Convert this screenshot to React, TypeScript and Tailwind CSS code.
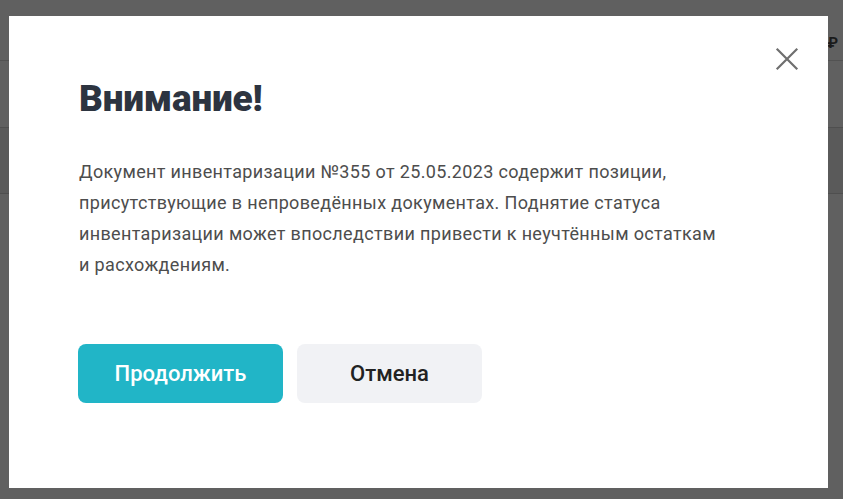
function BackgroundPage() {
  return (
    <div className="flex flex-col w-full h-full">
      <div className="h-[61px] border-b border-[#525252] flex items-start justify-end pt-[36px] pr-[5px]">
        <span className="text-[15px] font-bold leading-none text-[#1a1a1a]">₽</span>
      </div>
      <div className="h-[67px] border-b border-[#4f4f4f]" />
      <div className="h-[66px] bg-[#5a5a5a] border-b border-[#4f4f4f]" />
      <div className="flex-1" />
    </div>
  );
}

export default function App() {
  return (
    <div
      className="relative w-[843px] h-[499px] overflow-hidden bg-[#606060]"
      style={{ fontFamily: "Roboto, 'Noto Sans', sans-serif" }}
    >
      <BackgroundPage />

      <div className="absolute left-[9px] top-[16px] w-[819px] h-[472px] bg-white">
        <button className="absolute right-[29px] top-[31px] w-[24px] h-[24px] flex items-center justify-center text-[#6f6f6f]">
          <svg width="24" height="24" viewBox="0 0 24 24" fill="none">
            <path d="M2.5 2.5L21.5 21.5M21.5 2.5L2.5 21.5" stroke="currentColor" strokeWidth="2.2" strokeLinecap="square" />
          </svg>
        </button>

        <div className="pl-[70px] pt-[62px] flex flex-col">
          <h1 className="text-[37px] leading-[41px] font-black text-[#2d3440] tracking-[-0.2px]">
            Внимание!
          </h1>
          <p className="mt-[37px] w-[648px] text-[18px] leading-[31px] tracking-[0.35px] text-[#4d4d4d]">
            Документ инвентаризации №355 от 25.05.2023 содержит позиции, присутствующие в непроведённых документах. Поднятие статуса инвентаризации может впоследствии привести к неучтённым остаткам и расхождениям.
          </p>

          <div className="mt-[64px] -ml-px flex gap-[14px]">
            <button className="w-[205px] h-[59px] rounded-[8px] bg-[#21b5c7] text-white text-[22px] font-medium">
              Продолжить
            </button>
            <button className="w-[185px] h-[59px] rounded-[8px] bg-[#f1f2f5] text-[#222222] text-[22px] font-medium">
              Отмена
            </button>
          </div>
        </div>
      </div>
    </div>
  );
}
